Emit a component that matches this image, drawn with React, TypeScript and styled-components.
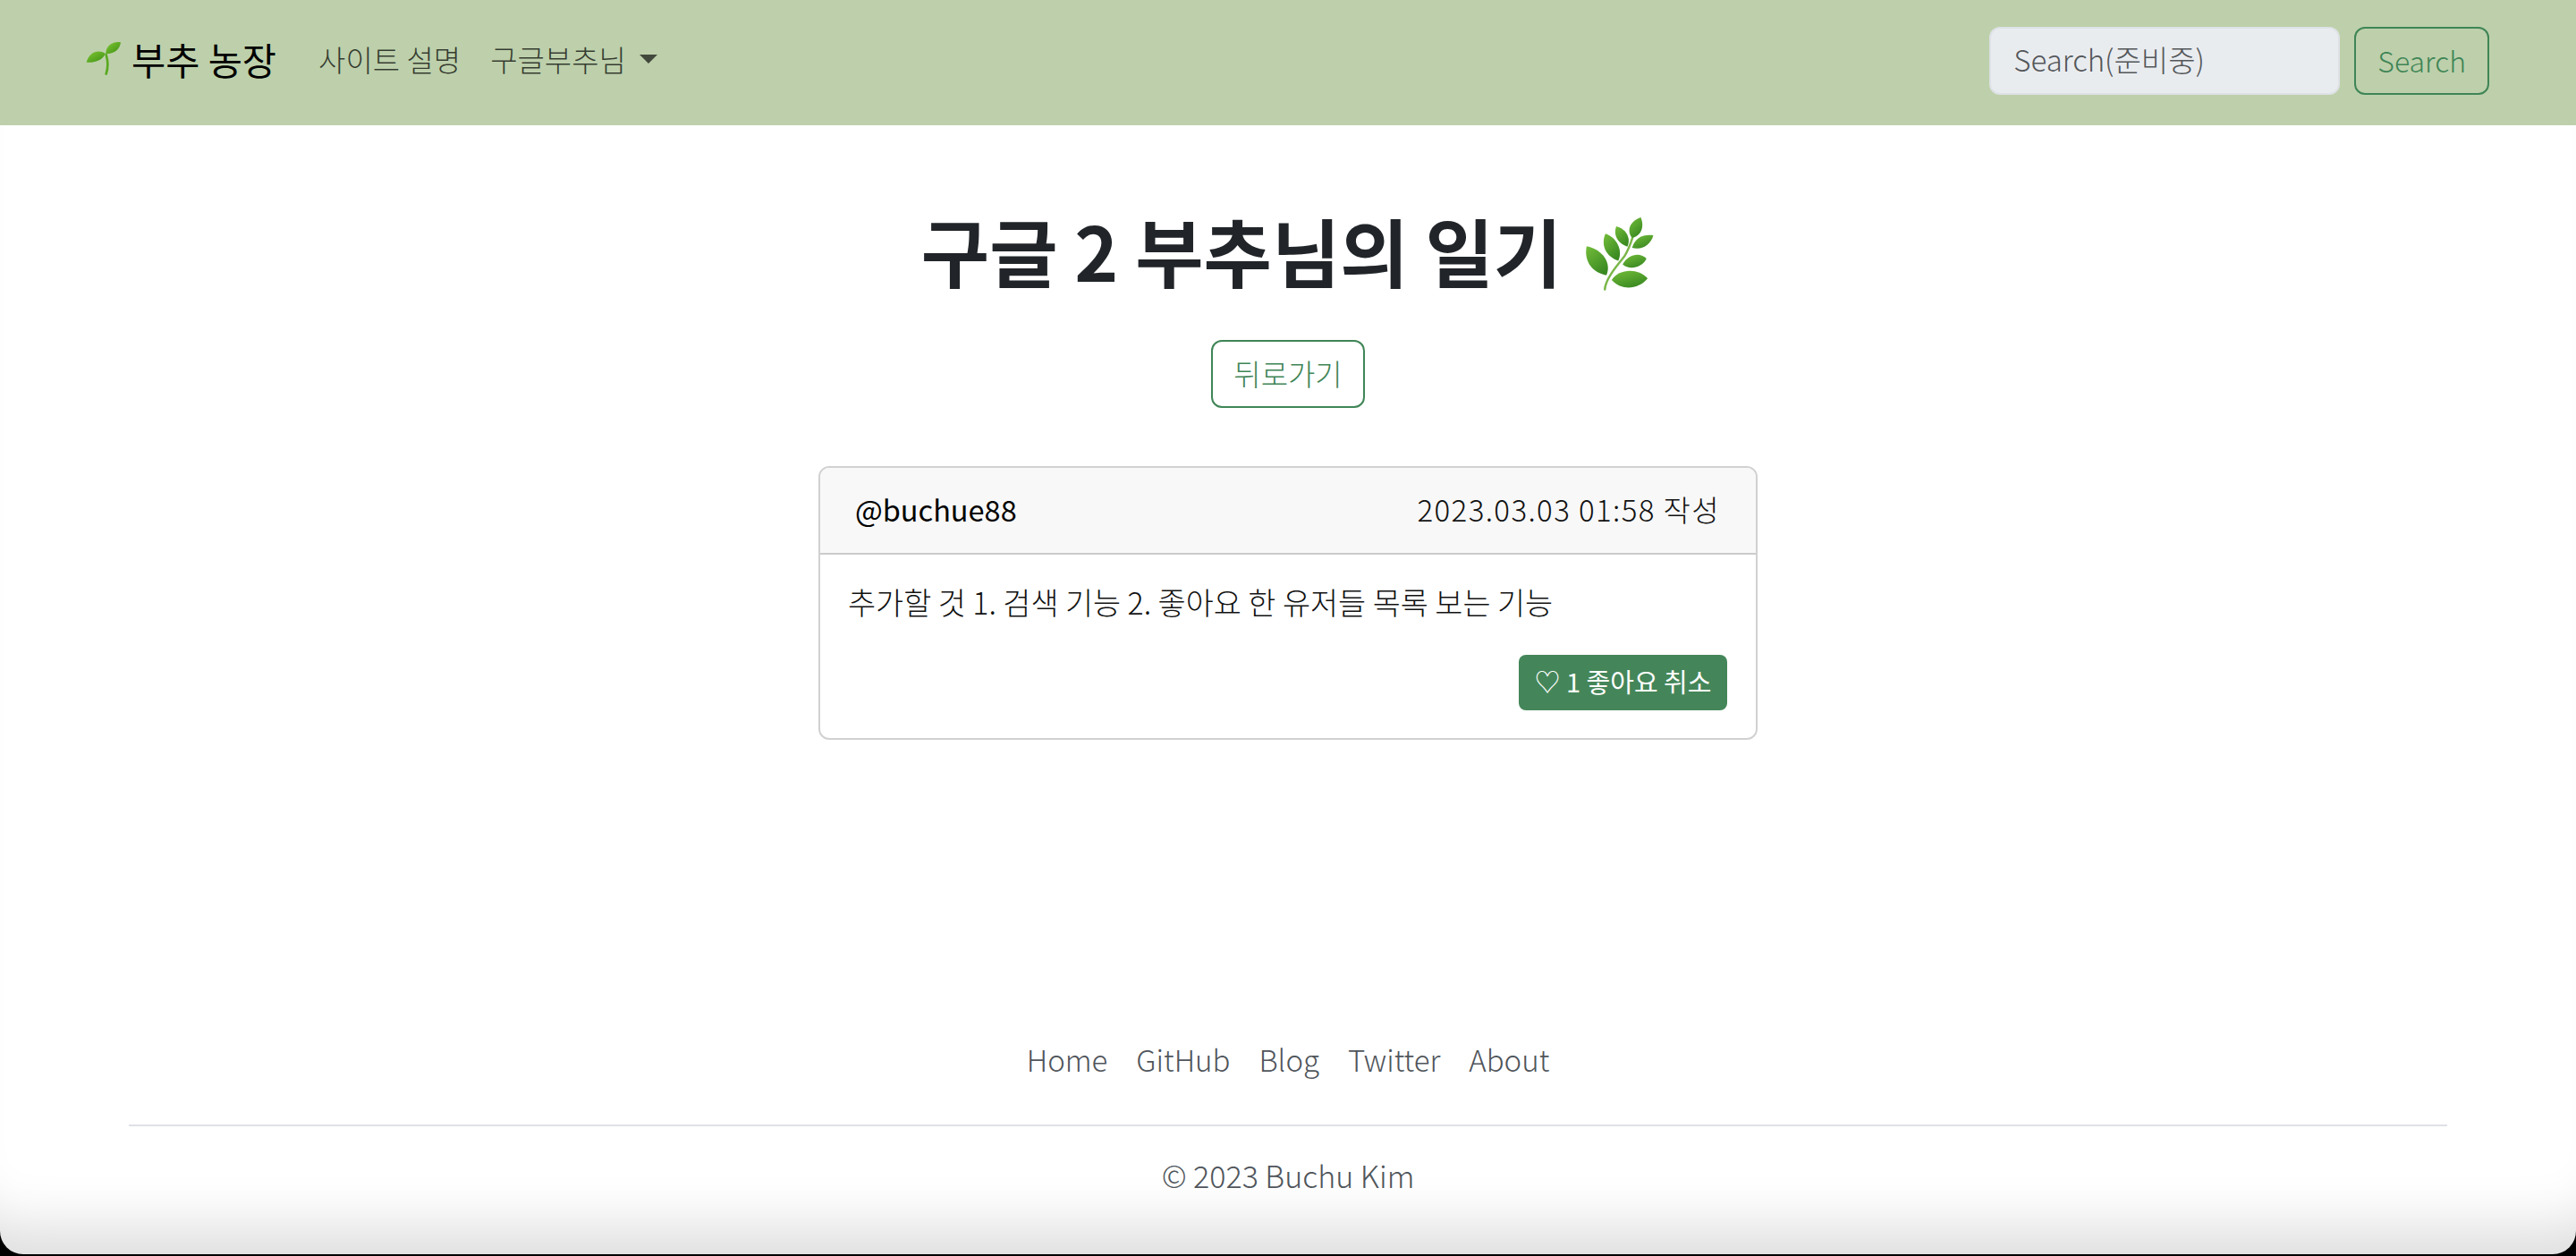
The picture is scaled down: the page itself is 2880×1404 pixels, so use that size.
import React from 'react'
import styled, { createGlobalStyle } from 'styled-components'

const GlobalStyle = createGlobalStyle`
  html, body {
    margin: 0;
    padding: 0;
    background: #000;
  }
  * {
    box-sizing: border-box;
  }
  body {
    font-family: "Noto Sans CJK KR", "Noto Sans", sans-serif;
    font-size: 32px;
    font-weight: 300;
    color: #212529;
  }
`

const Page = styled.div`
  width: 2880px;
  height: 1402px;
  background: #fff;
  border-radius: 0 0 26px 26px;
  display: flex;
  flex-direction: column;
  overflow: hidden;
  box-shadow: inset 0 -82px 60px -50px rgba(0, 0, 0, 0.13);
`

const Navbar = styled.nav`
  height: 140px;
  flex: none;
  background: #bdd0ab;
  display: flex;
  align-items: center;
  justify-content: space-between;
  padding: 0 97px 4px 95px;
`

const NavLeft = styled.div`
  display: flex;
  align-items: center;
  padding-bottom: 4px;
`

const Brand = styled.a`
  display: flex;
  align-items: center;
  gap: 10px;
  font-size: 41.5px;
  font-weight: 400;
  color: #000;
  margin-right: 47px;
`

const NavLink = styled.a`
  color: rgba(0, 0, 0, 0.72);
  font-size: 33px;
  margin-right: 33px;
  display: flex;
  align-items: center;
`

const Caret = styled.span`
  width: 0;
  height: 0;
  margin-left: 15px;
  border-top: 10px solid rgba(0, 0, 0, 0.65);
  border-left: 10px solid transparent;
  border-right: 10px solid transparent;
`

const SearchForm = styled.form`
  display: flex;
  gap: 16px;
`

const SearchInput = styled.input`
  width: 392px;
  height: 76px;
  padding: 0 24px 4px 25px;
  border: 2px solid #dee2e6;
  border-radius: 12px;
  background: #e9ecef;
  font: inherit;
  font-size: 33px;
  color: #212529;

  &::placeholder {
    color: #54575a;
    opacity: 1;
  }
`

const OutlineButton = styled.button`
  height: 76px;
  padding: 0 24px 3px;
  background: transparent;
  border: 2px solid #3f8556;
  border-radius: 12px;
  color: #3f8556;
  font: inherit;
`

const Main = styled.main`
  display: flex;
  flex-direction: column;
  align-items: center;
`

const Title = styled.h1`
  margin: 90px 0 0;
  height: 106px;
  padding-bottom: 8px;
  font-size: 83px;
  line-height: 98px;
  font-weight: 700;
  display: flex;
  align-items: center;
  gap: 26px;
`

const HerbSlot = styled.span`
  display: flex;
  margin-top: 8px;
`

const BackButton = styled(OutlineButton)`
  margin-top: 44px;
  width: 172px;
  padding: 0 0 3px;
  font-size: 33px;
`

const Card = styled.article`
  margin-top: 65px;
  width: 1050px;
  height: 306px;
  border: 2px solid rgba(0, 0, 0, 0.18);
  border-radius: 12px;
  overflow: hidden;
`

const CardHeader = styled.header`
  height: 97px;
  background: #f8f8f8;
  border-bottom: 2px solid rgba(0, 0, 0, 0.18);
  display: flex;
  align-items: center;
  justify-content: space-between;
  padding: 0 40px 4px 39px;
`

const Username = styled.span`
  color: #000;
  font-size: 32.5px;
  font-weight: 400;
`

const Written = styled.span`
  font-size: 33px;
  letter-spacing: 1.4px;
  color: #111;
`

const CardBody = styled.div`
  display: flex;
  flex-direction: column;
  padding: 28px 32px 0 31px;
`

const Content = styled.p`
  margin: 0;
  height: 50px;
  line-height: 50px;
  font-size: 33.8px;
  color: #111;
`

const LikeButton = styled.button`
  align-self: flex-end;
  margin-top: 34px;
  height: 62px;
  width: 233px;
  padding: 0 0 4px;
  border: none;
  border-radius: 8px;
  background: #448659;
  color: #fff;
  font: inherit;
  font-size: 29px;
  font-weight: 400;
`

const Footer = styled.footer`
  margin-top: auto;
  padding: 0 144px 64px;
`

const FooterNav = styled.div`
  display: flex;
  justify-content: center;
  gap: 32px;
  padding-bottom: 49px;
  border-bottom: 2px solid #dee2e6;
`

const FooterLink = styled.a`
  color: #4f555b;
  font-size: 33px;
`

const Copyright = styled.p`
  margin: 30px 0 0;
  text-align: center;
  color: #4f555b;
  font-size: 34px;
`

const Seedling: React.FC = () => (
  <svg width="42" height="42" viewBox="45 58 126 126">
    <defs>
      <linearGradient id="sprout" x1="0" y1="0" x2="1" y2="1">
        <stop offset="0" stopColor="#7fc832" />
        <stop offset="1" stopColor="#3d8f14" />
      </linearGradient>
    </defs>
    <path d="M116 106 C123 130 123 150 116 171" fill="none" stroke="#5aa820" strokeWidth="8" strokeLinecap="round" />
    <path d="M50 132 C58 100 88 86 113 103 C104 126 75 134 50 132Z" fill="url(#sprout)" />
    <path d="M115 103 C114 76 140 60 165 65 C162 90 140 106 115 103Z" fill="url(#sprout)" />
  </svg>
)

const HERB_LEAVES = [
  'M138 225 C88 215 66 175 75 132 C125 142 156 185 138 225Z',
  'M176 178 C134 165 120 125 135 92 C170 103 192 145 176 178Z',
  'M205 133 C170 120 160 92 170 68 C200 76 218 105 205 133Z',
  'M220 105 C200 80 216 50 248 40 C260 70 250 98 220 105Z',
  'M220 137 C230 102 260 92 288 97 C280 128 250 146 220 137Z',
  'M190 190 C208 155 248 150 266 172 C252 200 212 210 190 190Z',
  'M155 240 C178 204 238 200 270 235 C240 270 188 276 155 240Z'
]

const Herb: React.FC = () => (
  <svg width="78" height="84" viewBox="70 34 222 240">
    <defs>
      <linearGradient id="herb" x1="0" y1="0" x2="0.6" y2="1">
        <stop offset="0" stopColor="#74bd3a" />
        <stop offset="1" stopColor="#3a8a22" />
      </linearGradient>
    </defs>
    <path d="M133 270 C135 235 175 190 195 165 C205 150 215 125 222 103" fill="none" stroke="#7ab648" strokeWidth="7" strokeLinecap="round" />
    {HERB_LEAVES.map((d) => (
      <path key={d} d={d} fill="url(#herb)" />
    ))}
  </svg>
)

const App: React.FC = () => (
  <>
    <GlobalStyle />
    <Page>
      <Navbar>
        <NavLeft>
          <Brand>
            <Seedling />
            부추 농장
          </Brand>
          <NavLink>사이트 설명</NavLink>
          <NavLink>
            구글부추님
            <Caret />
          </NavLink>
        </NavLeft>
        <SearchForm>
          <SearchInput placeholder="Search(준비중)" />
          <OutlineButton type="button">Search</OutlineButton>
        </SearchForm>
      </Navbar>
      <Main>
        <Title>
          구글 2 부추님의 일기
          <HerbSlot>
            <Herb />
          </HerbSlot>
        </Title>
        <BackButton type="button">뒤로가기</BackButton>
        <Card>
          <CardHeader>
            <Username>@buchue88</Username>
            <Written>2023.03.03 01:58 작성</Written>
          </CardHeader>
          <CardBody>
            <Content>추가할 것 1. 검색 기능 2. 좋아요 한 유저들 목록 보는 기능</Content>
            <LikeButton type="button">♡ 1 좋아요 취소</LikeButton>
          </CardBody>
        </Card>
      </Main>
      <Footer>
        <FooterNav>
          {['Home', 'GitHub', 'Blog', 'Twitter', 'About'].map((label) => (
            <FooterLink key={label}>{label}</FooterLink>
          ))}
        </FooterNav>
        <Copyright>© 2023 Buchu Kim</Copyright>
      </Footer>
    </Page>
  </>
)

export default App
